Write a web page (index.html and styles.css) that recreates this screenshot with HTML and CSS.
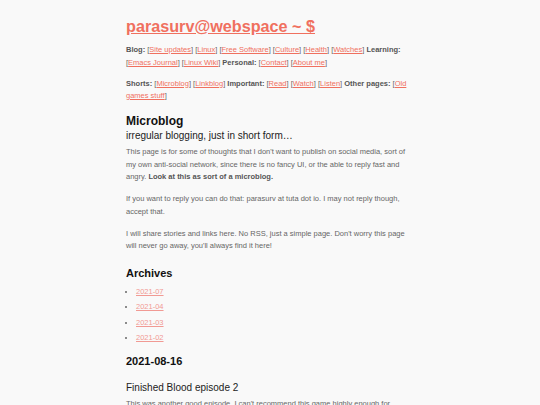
FILE: index.html
```html
<!DOCTYPE html>
<html>
<head>
<meta charset="utf-8">
<link rel="stylesheet" href="styles.css">
</head>
<body>
<div class="page">
  <h1 class="site-title"><a href="#">parasurv@webspace ~ $</a></h1>
  <p class="nav"><b>Blog:</b> [<a href="#">Site updates</a>] [<a href="#">Linux</a>] [<a href="#">Free Software</a>] [<a href="#">Culture</a>] [<a href="#">Health</a>] [<a href="#">Watches</a>] <b>Learning:</b> [<a href="#">Emacs Journal</a>] [<a href="#">Linux Wiki</a>] <b>Personal:</b> [<a href="#">Contact</a>] [<a href="#">About me</a>]</p>
  <p class="nav"><b>Shorts:</b> [<a href="#">Microblog</a>] [<a href="#">Linkblog</a>] <b>Important:</b> [<a href="#">Read</a>] [<a href="#">Watch</a>] [<a href="#">Listen</a>] <b>Other pages:</b> [<a href="#">Old games stuff</a>]</p>
  <h2 class="page-title">Microblog</h2>
  <div class="subtitle">irregular blogging, just in short form…</div>
  <p>This page is for some of thoughts that I don't want to publish on social media, sort of my own anti-social network, since there is no fancy UI, or the able to reply fast and angry. <b>Look at this as sort of a microblog.</b></p>
  <p>If you want to reply you can do that: parasurv at tuta dot io. I may not reply though, accept that.</p>
  <p>I will share stories and links here. No RSS, just a simple page. Don't worry this page will never go away, you'll always find it here!</p>
  <h3 class="section archives-title">Archives</h3>
  <ul class="archives">
    <li><a href="#">2021-07</a></li>
    <li><a href="#">2021-04</a></li>
    <li><a href="#">2021-03</a></li>
    <li><a href="#">2021-02</a></li>
  </ul>
  <h3 class="section date">2021-08-16</h3>
  <h4 class="entry-title">Finished Blood episode 2</h4>
  <p class="entry-text">This was another good episode. I can't recommend this game highly enough for anyone who likes old shooters.</p>
</div>
</body>
</html>
```
FILE: styles.css
```css
html, body {
  margin: 0;
  padding: 0;
  background: #f9f9f9;
}
body {
  font-family: "Liberation Sans", Arial, sans-serif;
  font-size: 7.5px;
  line-height: 12.5px;
  color: #666;
}
.page {
  width: 288px;
  margin: 0 auto;
  padding-top: 16px;
}
a {
  color: #f0705f;
}
b {
  color: #555;
}
.site-title {
  margin: 0 0 8px;
  font-size: 16.2px;
  line-height: 20px;
  font-weight: bold;
}
.site-title a {
  color: #f0705f;
}
p {
  margin: 0 0 9.5px;
}
.nav {
  margin-bottom: 8.5px;
}
.page-title {
  margin: 10.5px 0 0;
  font-size: 12px;
  line-height: 17px;
  color: #111;
}
.subtitle {
  font-size: 10px;
  line-height: 12px;
  color: #222;
  margin-bottom: 4px;
}
.section {
  margin: 0;
  font-size: 11px;
  line-height: 15px;
  color: #111;
}
.archives-title {
  margin-top: 13.5px;
  margin-bottom: 3px;
}
.archives {
  margin: 0;
  padding-left: 10px;
}
.archives li {
  line-height: 15.3px;
  color: #666;
}
.archives a {
  color: #f19a94;
}
.date {
  margin-top: 9px;
}
.entry-title {
  margin: 11px 0 3px;
  font-size: 10px;
  line-height: 15px;
  font-weight: normal;
  color: #222;
}
```
